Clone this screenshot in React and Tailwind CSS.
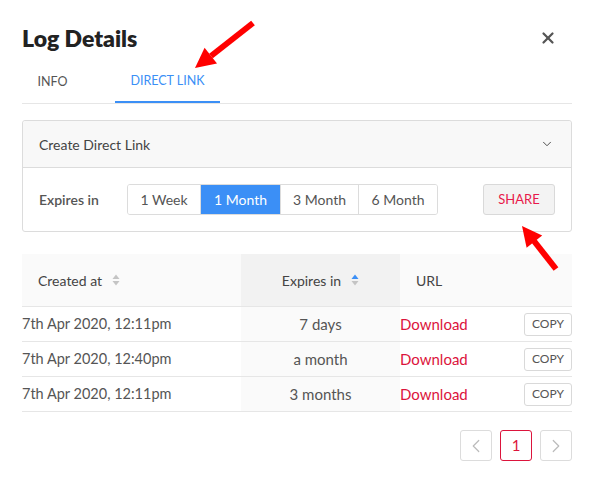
import { X, ChevronDown, ChevronLeft, ChevronRight } from "lucide-react";

const rows = [
  { created: "7th Apr 2020, 12:11pm", expires: "7 days" },
  { created: "7th Apr 2020, 12:40pm", expires: "a month" },
  { created: "7th Apr 2020, 12:11pm", expires: "3 months" },
];

const periods = [
  { label: "1 Week", w: "w-[72px]" },
  { label: "1 Month", w: "w-[80px]" },
  { label: "3 Month", w: "w-[78px]" },
  { label: "6 Month", w: "w-[79px]" },
];

// little up/down sort carets
const SortIcon = ({ active }) => (
  <svg width="8" height="12" viewBox="0 0 8 12" className="ml-[10px]">
    <path d="M4 0.5 L7.5 5 H0.5 Z" fill={active ? "#3b8ff6" : "#c4c4c4"} />
    <path d="M4 11.5 L7.5 7 H0.5 Z" fill="#c4c4c4" />
  </svg>
);

const App = () => {
  const selected = "1 Month";

  return (
    <div className="relative w-[602px] h-[493px] bg-white pl-[22px] pr-[30px] font-['Lato','Liberation_Sans',sans-serif] text-[#555]">
      {/* header */}
      <div className="flex items-center justify-between pt-[24px] h-[52px]">
        <h1 className="text-[23px] leading-[28px] font-extrabold text-[#222]">Log Details</h1>
        <button className="mr-[15px] text-[#555]">
          <X size={18} strokeWidth={3} />
        </button>
      </div>

      {/* tabs */}
      <div className="flex gap-[32px] mt-[10px] border-b border-[#e6e6e6]">
        <div className="h-[41px] w-[61px] flex items-center justify-center text-[12.5px] text-[#555]">INFO</div>
        <div className="h-[41px] w-[105px] flex items-center justify-center text-[12.5px] text-[#3b8ff6] border-b-2 border-[#3b8ff6] -mb-px">
          DIRECT LINK
        </div>
      </div>

      {/* create link card */}
      <div className="mt-[16px] border border-[#dcdcdc] rounded-[3px]">
        <div className="h-[47px] bg-[#f8f8f8] border-b border-[#dcdcdc] flex items-center justify-between pl-4 pr-[17px] rounded-t-[3px]">
          <span className="text-[14px] text-[#444]">Create Direct Link</span>
          <ChevronDown size={14} strokeWidth={1.6} className="text-[#444]" />
        </div>
        <div className="flex items-center justify-between px-4 py-4">
          <div className="flex items-center">
            <span className="w-[88px] text-[14px] font-semibold text-[#555]">Expires in</span>
            <div className="flex h-[31px] border border-[#dcdcdc] rounded-[3px] overflow-hidden">
              {periods.map((p, i) => (
                <button
                  key={p.label}
                  className={`${p.w} text-[14px] ${
                    p.label === selected ? "bg-[#3b8ff6] text-white" : "text-[#555] bg-white"
                  } ${i > 0 ? "border-l border-[#dcdcdc]" : ""}`}
                >
                  {p.label}
                </button>
              ))}
            </div>
          </div>
          <button className="w-[72px] h-[31px] bg-[#f3f3f3] border border-[#d9d9d9] rounded-[3px] text-[13px] text-[#e8194b]">
            SHARE
          </button>
        </div>
      </div>

      {/* links table */}
      <div className="mt-[22px]">
        <div className="flex h-[53px] bg-[#fafafa] border-b border-[#e6e6e6] text-[14px] text-[#444]">
          <div className="w-[219px] flex items-center pl-4">
            Created at <SortIcon />
          </div>
          <div className="w-[159px] flex items-center justify-center bg-[#f2f2f2]">
            Expires in <SortIcon active />
          </div>
          <div className="flex-1 flex items-center pl-4">URL</div>
        </div>
        {rows.map((r, i) => (
          <div key={i} className="flex h-[35px] border-b border-[#e6e6e6] text-[15px]">
            <div className="w-[219px] flex items-center text-[14.5px] text-[#555]">{r.created}</div>
            <div className="w-[159px] flex items-center justify-center bg-[#fafafa] text-[#555]">{r.expires}</div>
            <div className="flex-1 flex items-center justify-between">
              <a className="text-[#dc143c]">Download</a>
              <button className="w-[48px] h-[23px] border border-[#d9d9d9] rounded-[3px] text-[12px] text-[#555]">COPY</button>
            </div>
          </div>
        ))}
      </div>

      {/* pagination */}
      <div className="flex justify-end gap-[8px] mt-[18px]">
        <button className="w-[32px] h-[31px] border border-[#dcdcdc] rounded-[3px] flex items-center justify-center text-[#bbb]">
          <ChevronLeft size={22} strokeWidth={1.3} />
        </button>
        <button className="w-[32px] h-[31px] border border-[#dc143c] rounded-[3px] flex items-center justify-center text-[15px] text-[#dc143c]">
          1
        </button>
        <button className="w-[32px] h-[31px] border border-[#dcdcdc] rounded-[3px] flex items-center justify-center text-[#bbb]">
          <ChevronRight size={22} strokeWidth={1.3} />
        </button>
      </div>

      {/* red annotation arrows */}
      <svg className="absolute inset-0 pointer-events-none" width="602" height="493">
        <line x1="253" y1="23" x2="211" y2="56" stroke="#ff0000" strokeWidth="6" />
        <polygon points="195,68 217,63.5 204.6,47.7" fill="#ff0000" />
        <line x1="556" y1="269" x2="534" y2="241" stroke="#ff0000" strokeWidth="6" />
        <polygon points="522,226 542.2,235.4 526.6,247.8" fill="#ff0000" />
      </svg>
    </div>
  );
};

export default App;
